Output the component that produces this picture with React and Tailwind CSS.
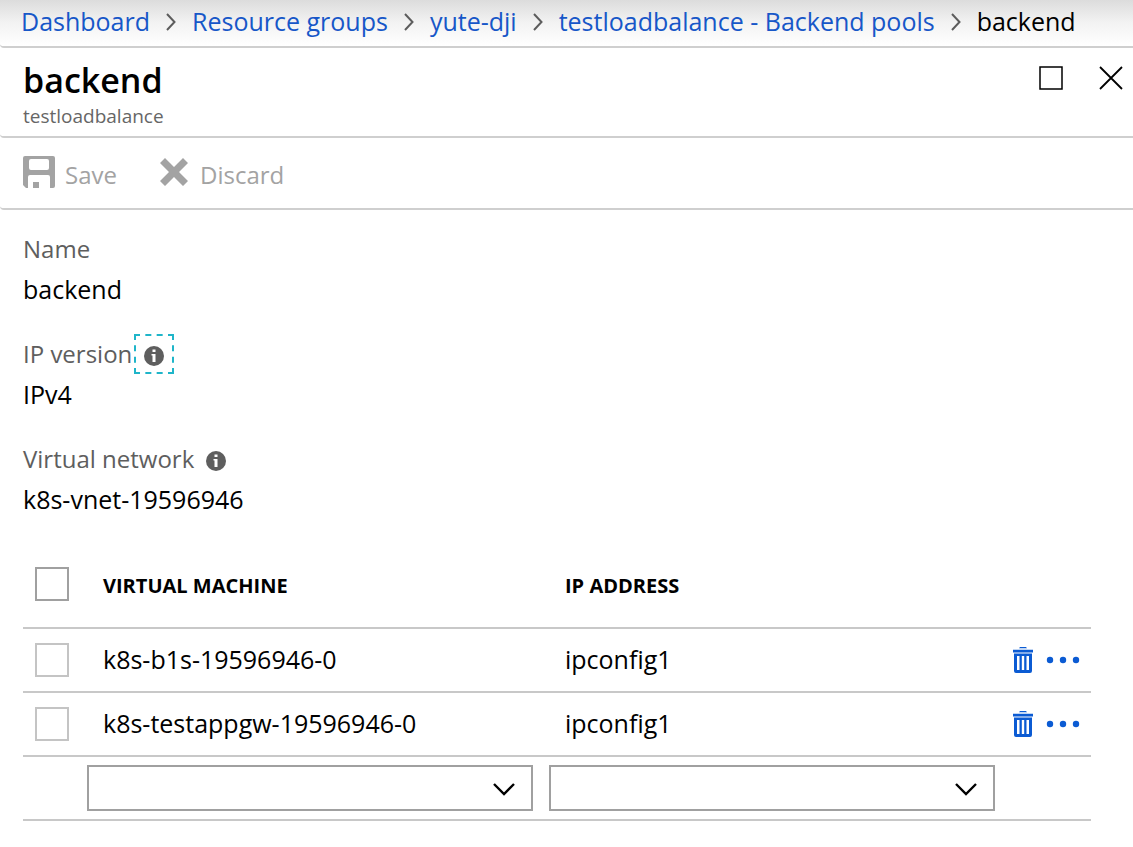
import React from "react";

const crumbs = [
  "Dashboard",
  "Resource groups",
  "yute-dji",
  "testloadbalance - Backend pools",
];

const fields = [
  { label: "Name", value: "backend" },
  { label: "IP version", value: "IPv4", info: true, focused: true },
  { label: "Virtual network", value: "k8s-vnet-19596946", info: true },
];

const machines = [
  { name: "k8s-b1s-19596946-0", ip: "ipconfig1" },
  { name: "k8s-testappgw-19596946-0", ip: "ipconfig1" },
];

const InfoIcon = () => (
  <svg width="20" height="20" viewBox="0 0 20 20">
    <circle cx="10" cy="10" r="10" fill="#5e5e5e" />
    <path d="M8.5 3.5h3v2.6h-3zM7.5 8h4v8h-3V9.6h-1z" fill="#fff" />
  </svg>
);

const SaveIcon = () => (
  <svg width="32" height="32" viewBox="0 0 32 32">
    <path
      fillRule="evenodd"
      fill="#a3a3a3"
      d="M2 0h28a2 2 0 0 1 2 2v28a2 2 0 0 1-2 2h-3V21a2 2 0 0 0-2-2H7a2 2 0 0 0-2 2v11H3l-3-3V2a2 2 0 0 1 2-2zM8 3a2 2 0 0 0-2 2v7a2 2 0 0 0 2 2h16a2 2 0 0 0 2-2V5a2 2 0 0 0-2-2z"
    />
    <path d="M10 26h6v6h-6z" fill="#a3a3a3" />
  </svg>
);

const DiscardIcon = () => (
  <svg width="28" height="28" viewBox="0 0 28 28">
    <path
      d="M5 0L14 9 23 0 28 5 19 14 28 23 23 28 14 19 5 28 0 23 9 14 0 5z"
      fill="#a3a3a3"
    />
  </svg>
);

const TrashIcon = () => (
  <svg width="22" height="26" viewBox="0 0 22 26">
    <path
      fillRule="evenodd"
      fill="#0b5bd3"
      d="M8 0h6l1 1.200H7zM1 2.800h20v2.600H1zM2 6.500h18V24a2 2 0 0 1-2 2H4a2 2 0 0 1-2-2zM5 9v14h2.500V9zM9.800 9v14h2.400V9zM14.500 9v14H17V9z"
    />
  </svg>
);

const DotsIcon = () => (
  <svg width="34" height="8" viewBox="0 0 34 8" fill="#0b5bd3">
    <circle cx="4" cy="4" r="3.200" />
    <circle cx="17" cy="4" r="3.200" />
    <circle cx="30" cy="4" r="3.200" />
  </svg>
);

const CheckBox = ({ label, className }) => (
  <input
    type="checkbox"
    aria-label={label}
    className={`block ml-3 size-[34px] appearance-none border-2 bg-white ${className}`}
  />
);

const Picker = ({ label }) => (
  <div className="relative mr-4">
    <select
      aria-label={label}
      className="block w-full h-[46px] appearance-none border-2 border-[#a0a0a0] bg-white px-4"
    >
      <option></option>
    </select>
    <svg
      className="absolute right-[17px] top-[17px] pointer-events-none"
      width="24"
      height="14"
      viewBox="0 0 24 14"
      fill="none"
      stroke="#000"
      strokeWidth="2.400"
    >
      <path d="M2 2l10 10L22 2" />
    </svg>
  </div>
);

const App = () => {
  return (
    <div className="min-h-screen bg-white text-black text-[24px] font-['Open_Sans','Noto_Sans',sans-serif]">
      <nav
        aria-label="Breadcrumb"
        className="h-12 pl-[21px] pb-0.5 flex items-center whitespace-nowrap text-[25px] border-b-2 border-[#cfcfcf] rounded-bl-sm bg-linear-to-b from-[#dcdcdc] via-[#f3f3f3] to-white"
      >
        {crumbs.map((crumb) => (
          <React.Fragment key={crumb}>
            <a href="#" className="text-[#1757c8]">
              {crumb}
            </a>
            <span className="w-[42px] flex shrink-0 justify-center">
              <svg width="10" height="18" viewBox="0 0 10 18" fill="none" stroke="#5c5c5c" strokeWidth="2">
                <path d="M1 1l7.500 8L1 17" />
              </svg>
            </span>
          </React.Fragment>
        ))}
        <span>backend</span>
      </nav>

      <header className="h-[90px] pl-[23px] pr-2.5 pt-3 flex justify-between border-b-2 border-[#cfcfcf] rounded-bl-sm">
        <div>
          <h1 className="text-[34px] leading-10 font-semibold">backend</h1>
          <p className="text-[19px] leading-8 text-[#666]">testloadbalance</p>
        </div>
        <div className="flex h-9 items-center gap-9">
          <button type="button" aria-label="Maximize">
            <svg width="24" height="24" viewBox="0 0 24 24" fill="none" stroke="#000" strokeWidth="1.500">
              <path d="M1 1h22v22H1z" />
            </svg>
          </button>
          <button type="button" aria-label="Close">
            <svg width="24" height="24" viewBox="0 0 24 24" fill="none" stroke="#000" strokeWidth="1.800">
              <path d="M1 1l22 22M23 1L1 23" />
            </svg>
          </button>
        </div>
      </header>

      <div className="h-[72px] px-[23px] pb-0.5 flex items-center gap-[43px] border-b-2 border-[#cfcfcf] rounded-bl-sm text-[#a3a3a3]">
        <button type="button" disabled className="flex items-center gap-2.5">
          <SaveIcon />
          <span className="pt-1.5">Save</span>
        </button>
        <button type="button" disabled className="flex items-center gap-3">
          <DiscardIcon />
          <span className="pt-1.5">Discard</span>
        </button>
      </div>

      <main className="pl-[23px] pr-[42px] pt-[19px]">
        <dl className="flex flex-col gap-[25px] leading-10">
          {fields.map((field) => (
            <div key={field.label}>
              <dt className="flex text-[#5e5e5e]">
                {field.label}
                {field.info && (
                  <button
                    type="button"
                    aria-label={`About ${field.label}`}
                    className={`size-10 ml-0.5 pt-1 flex items-center justify-center border-2 border-dashed ${
                      field.focused ? "border-[#1fb5c9]" : "border-transparent"
                    }`}
                  >
                    <InfoIcon />
                  </button>
                )}
              </dt>
              <dd className="text-[25px]">{field.value}</dd>
            </div>
          ))}
        </dl>

        <table className="mt-[22px] w-full table-fixed border-separate border-spacing-0 text-left [&_td]:border-b-2 [&_td]:border-[#c8c8c8] [&_th]:border-b-2 [&_th]:border-[#c8c8c8]">
          <colgroup>
            <col className="w-16" />
            <col />
            <col />
            <col className="w-20" />
          </colgroup>
          <thead>
            <tr className="h-22 text-[20px]">
              <th>
                <CheckBox label="Select all" className="border-[#a0a0a0]" />
              </th>
              <th className="pl-4 pt-1 font-bold">VIRTUAL MACHINE</th>
              <th className="pl-4 pt-1 font-bold">IP ADDRESS</th>
              <th></th>
            </tr>
          </thead>
          <tbody className="text-[25px]">
            {machines.map((machine) => (
              <tr key={machine.name} className="h-16">
                <td>
                  <CheckBox label={`Select ${machine.name}`} className="border-[#c4c4c4]" />
                </td>
                <td className="pl-4">{machine.name}</td>
                <td className="pl-4">{machine.ip}</td>
                <td>
                  <div className="flex items-center gap-3 pl-px">
                    <button type="button" aria-label={`Delete ${machine.name}`}>
                      <TrashIcon />
                    </button>
                    <button type="button" aria-label={`More actions for ${machine.name}`}>
                      <DotsIcon />
                    </button>
                  </div>
                </td>
              </tr>
            ))}
            <tr className="h-16">
              <td></td>
              <td>
                <Picker label="Virtual machine" />
              </td>
              <td>
                <Picker label="IP address" />
              </td>
              <td></td>
            </tr>
          </tbody>
        </table>
      </main>
    </div>
  );
};

export default App;
